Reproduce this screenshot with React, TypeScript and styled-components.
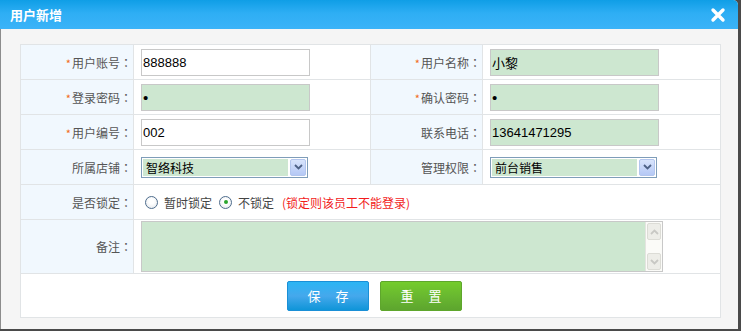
import React, { useState } from "react";
import styled, { createGlobalStyle } from "styled-components";

const GlobalStyle = createGlobalStyle`
  html, body {
    margin: 0;
    padding: 0;
    background: #4a4a4a;
    font-family: "Noto Sans CJK SC", "Noto Sans", sans-serif;
    font-size: 12px;
  }
`;

const Dialog = styled.div`
  width: 738px;
  height: 329px;
  display: flex;
  flex-direction: column;
  background: #f5f5f5;
  border-top-right-radius: 5px;
  overflow: hidden;
`;

const Header = styled.div`
  height: 29px;
  flex-shrink: 0;
  display: flex;
  align-items: center;
  justify-content: space-between;
  padding: 0 10px 0 10px;
  background: linear-gradient(to bottom, #0f9ee6 0%, #2eaef4 45%, #3bb3f8 100%);
`;

const Title = styled.h1`
  margin: 0;
  color: #fff;
  font-size: 13px;
  font-weight: bold;
`;

const CloseButton = styled.button`
  border: none;
  background: none;
  padding: 0;
  width: 16px;
  height: 16px;
  margin-right: 2px;
  cursor: pointer;
  display: flex;
`;

const Body = styled.div`
  flex: 1;
  padding: 15px 18px 0 19px;
  border-left: 1px solid #8c8c8c;
`;

const Table = styled.table`
  width: 700px;
  border-collapse: collapse;
  background: #fff;
  table-layout: fixed;
`;

const Row = styled.tr<{ tall?: boolean }>`
  height: ${(p) => (p.tall ? "53px" : "35px")};
`;

const Label = styled.td`
  background: #f1f8fe;
  border: 1px solid #e1e4e6;
  text-align: right;
  padding: 0 1px 0 0;
  color: #555;
  font-size: 12px;
  white-space: nowrap;
`;

const Colon = styled.span`
  font-family: "Noto Sans CJK JP", sans-serif;
`;

const Star = styled.span`
  color: #f26b21;
  font-size: 11px;
  margin-right: 1px;
`;

const Cell = styled.td`
  border: 1px solid #e1e4e6;
  padding: 0 0 0 7px;
  vertical-align: middle;
`;

const TextInput = styled.input<{ filled?: boolean }>`
  box-sizing: border-box;
  width: 169px;
  height: 27px;
  border: 1px solid #c8c8c8;
  background: ${(p) => (p.filled ? "#cde7d0" : "#fff")};
  padding: 0 4px 0 1px;
  font-family: "Liberation Sans", "Noto Sans CJK SC", sans-serif;
  font-size: 13px;
  color: #000;
  outline: none;
  display: block;
  &[type="password"] {
    font-size: 15px;
  }
`;

const SelectBox = styled.div`
  box-sizing: border-box;
  width: 167px;
  height: 21px;
  border: 1px solid #7f9db9;
  background: #fff;
  display: flex;
  align-items: center;
  padding: 1px;
`;

const SelectValue = styled.div`
  flex: 1;
  height: 17px;
  background: #cde7d0;
  padding-left: 3px;
  line-height: 17px;
  font-size: 12px;
  color: #000;
`;

const SelectArrow = styled.div`
  width: 16px;
  height: 17px;
  margin-left: 2px;
  border-radius: 2px;
  background: linear-gradient(to bottom, #d8e4fc, #b5c8f5);
  border: 1px solid #b3c6ee;
  box-sizing: border-box;
  display: flex;
  align-items: center;
  justify-content: center;
`;

const RadioGroup = styled.div`
  display: flex;
  align-items: center;
  padding-left: 4px;
`;

const RadioOption = styled.label`
  display: flex;
  align-items: center;
  gap: 6px;
  color: #444;
  font-size: 12px;
  margin-right: 7px;
`;

const RadioDot = styled.span<{ checked?: boolean }>`
  width: 11px;
  height: 11px;
  border-radius: 50%;
  border: 1px solid #4f6d8d;
  background: radial-gradient(circle at 50% 40%, #fff 30%, #dfe3e8 100%);
  display: flex;
  align-items: center;
  justify-content: center;
  &::after {
    content: "";
    width: 4px;
    height: 4px;
    border-radius: 50%;
    background: ${(p) => (p.checked ? "#2aa52e" : "transparent")};
  }
`;

const Hint = styled.span`
  color: #f21c1c;
  font-size: 12px;
  margin-left: 1px;
`;

const NoteArea = styled.div`
  box-sizing: border-box;
  width: 522px;
  height: 51px;
  border: 1px solid #c8c8c8;
  display: flex;
  margin: 1px 0;
`;

const NoteText = styled.textarea`
  flex: 1;
  border: none;
  background: #cde7d0;
  resize: none;
  outline: none;
  padding: 0;
`;

const ScrollBar = styled.div`
  width: 16px;
  background: #fbfbf8;
  border-left: 1px solid #e4e4e0;
  display: flex;
  flex-direction: column;
  justify-content: space-between;
  padding: 1px 0;
`;

const ScrollBtn = styled.div`
  height: 15px;
  margin: 0 1px;
  background: #edede8;
  border: 1px solid #dcdcd6;
  border-radius: 2px;
  display: flex;
  align-items: center;
  justify-content: center;
`;

const ButtonCell = styled.td`
  border: 1px solid #e1e4e6;
  height: 41px;
`;

const ButtonBar = styled.div`
  display: flex;
  justify-content: center;
  gap: 11px;
  padding-left: 8px;
`;

const ActionButton = styled.button<{ tone: "blue" | "green" }>`
  width: 82px;
  height: 30px;
  padding: 0;
  border-radius: 2px;
  color: #fff;
  font-family: "Noto Sans CJK SC", sans-serif;
  font-size: 13px;
  letter-spacing: 15px;
  text-indent: 15px;
  white-space: nowrap;
  cursor: pointer;
  border: 1px solid ${(p) => (p.tone === "blue" ? "#1a8fd6" : "#5ea62c")};
  background: ${(p) =>
    p.tone === "blue"
      ? "linear-gradient(to bottom, #2bb5f4, #45a8ec 50%, #0f95d8)"
      : "linear-gradient(to bottom, #74cc2c, #69b830 50%, #5da52e)"};
`;

const Chevron = ({ up, color }: { up?: boolean; color: string }) => (
  <svg width="9" height="6" viewBox="0 0 9 6">
    <path
      d={up ? "M1 5 L4.5 1.5 L8 5" : "M1 1 L4.5 4.5 L8 1"}
      fill="none"
      stroke={color}
      strokeWidth="1.8"
    />
  </svg>
);

function Select({ value }: { value: string }) {
  return (
    <SelectBox>
      <SelectValue>{value}</SelectValue>
      <SelectArrow>
        <Chevron color="#4d6185" />
      </SelectArrow>
    </SelectBox>
  );
}

function FieldLabel({ text, required }: { text: string; required?: boolean }) {
  return (
    <Label>
      {required && <Star>*</Star>}
      {text}
      <Colon>：</Colon>
    </Label>
  );
}

function App() {
  const [locked, setLocked] = useState(false);

  return (
    <>
      <GlobalStyle />
      <Dialog>
        <Header>
          <Title>用户新增</Title>
          <CloseButton aria-label="关闭">
            <svg width="16" height="16" viewBox="0 0 16 16">
              <path
                d="M3 3 L13 13 M13 3 L3 13"
                stroke="#fff"
                strokeWidth="3.4"
                strokeLinecap="round"
              />
            </svg>
          </CloseButton>
        </Header>
        <Body>
          <Table>
            <colgroup>
              <col style={{ width: 113 }} />
              <col style={{ width: 237 }} />
              <col style={{ width: 112 }} />
              <col style={{ width: 238 }} />
            </colgroup>
            <tbody>
              <Row>
                <FieldLabel required text="用户账号" />
                <Cell>
                  <TextInput defaultValue="888888" />
                </Cell>
                <FieldLabel required text="用户名称" />
                <Cell>
                  <TextInput filled defaultValue="小黎" />
                </Cell>
              </Row>
              <Row>
                <FieldLabel required text="登录密码" />
                <Cell>
                  <TextInput filled type="password" defaultValue="1" />
                </Cell>
                <FieldLabel required text="确认密码" />
                <Cell>
                  <TextInput filled type="password" defaultValue="1" />
                </Cell>
              </Row>
              <Row>
                <FieldLabel required text="用户编号" />
                <Cell>
                  <TextInput defaultValue="002" />
                </Cell>
                <FieldLabel text="联系电话" />
                <Cell>
                  <TextInput filled defaultValue="13641471295" />
                </Cell>
              </Row>
              <Row>
                <FieldLabel text="所属店铺" />
                <Cell>
                  <Select value="智络科技" />
                </Cell>
                <FieldLabel text="管理权限" />
                <Cell>
                  <Select value="前台销售" />
                </Cell>
              </Row>
              <Row>
                <FieldLabel text="是否锁定" />
                <Cell colSpan={3}>
                  <RadioGroup>
                    <RadioOption onClick={() => setLocked(true)}>
                      <RadioDot checked={locked} />
                      暂时锁定
                    </RadioOption>
                    <RadioOption onClick={() => setLocked(false)}>
                      <RadioDot checked={!locked} />
                      不锁定
                    </RadioOption>
                    <Hint>(锁定则该员工不能登录)</Hint>
                  </RadioGroup>
                </Cell>
              </Row>
              <Row tall>
                <FieldLabel text="备注" />
                <Cell colSpan={3}>
                  <NoteArea>
                    <NoteText />
                    <ScrollBar>
                      <ScrollBtn>
                        <Chevron up color="#c8c8c4" />
                      </ScrollBtn>
                      <ScrollBtn>
                        <Chevron color="#c8c8c4" />
                      </ScrollBtn>
                    </ScrollBar>
                  </NoteArea>
                </Cell>
              </Row>
              <tr>
                <ButtonCell colSpan={4}>
                  <ButtonBar>
                    <ActionButton tone="blue">保存</ActionButton>
                    <ActionButton tone="green">重置</ActionButton>
                  </ButtonBar>
                </ButtonCell>
              </tr>
            </tbody>
          </Table>
        </Body>
      </Dialog>
    </>
  );
}

export default App;
